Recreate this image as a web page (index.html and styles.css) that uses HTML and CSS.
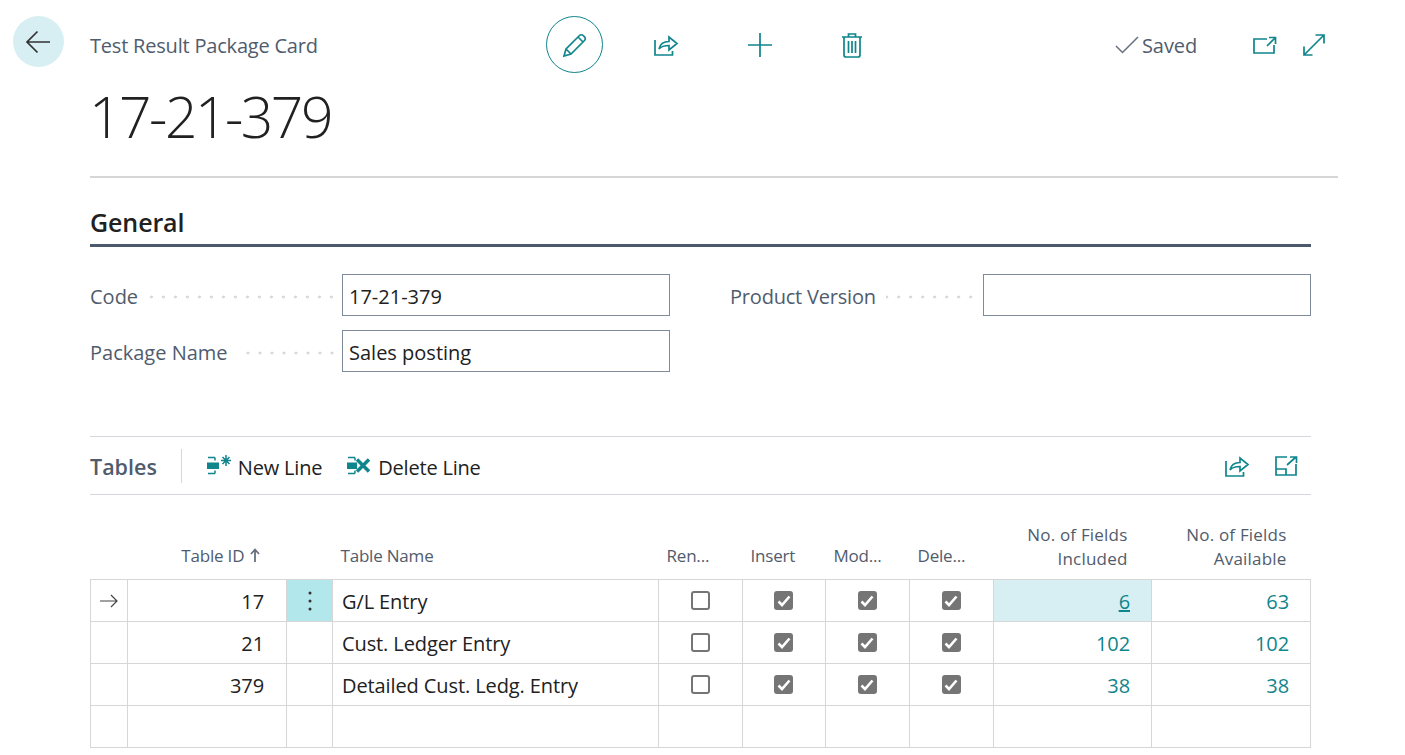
FILE: index.html
```html
<!DOCTYPE html>
<html lang="en">
<head>
<meta charset="utf-8">
<title>Test Result Package Card</title>
<link rel="stylesheet" href="styles.css">
</head>
<body>
<div class="page">
  <header class="topbar">
    <button class="back" aria-label="Back">
      <svg width="28" height="24" viewBox="0 0 28 24"><path d="M25 12H2M12.500 1.500 2 12l10.500 10.500" class="s-dark"/></svg>
    </button>
    <div class="caption">Test Result Package Card</div>
    <div class="actions">
      <span class="edit"><svg width="26" height="26" viewBox="0 0 26 26"><path d="M2 24l2-7L17.500 3.500a2.600 2.600 0 0 1 3.700 0l1.300 1.300a2.600 2.600 0 0 1 0 3.700L9 22zM4 17l5 5M16 5l5 5" class="s-teal"/></svg></span>
      <svg class="share" width="26" height="24" viewBox="0 0 26 24"><path d="M2 7v15h17.500v-4M6 16c1-5 5-7.500 10-7.500V4l8 6.500-8 6.500v-4.500c-4 0-7.500.5-10 3.500z" class="s-teal"/></svg>
      <svg class="plus" width="26" height="26" viewBox="0 0 26 26"><path d="M13 1v24M1 13h24" class="s-teal"/></svg>
      <svg class="trash" width="22" height="26" viewBox="0 0 22 26"><path d="M1 5h20M7.500 5V2h7v3M3 5v18a2 2 0 0 0 2 2h12a2 2 0 0 0 2-2V5M7.500 9v12M11 9v12M14.500 9v12" class="s-teal"/></svg>
    </div>
    <div class="status">
      <svg width="24" height="18" viewBox="0 0 24 18"><path d="M1 10l6.500 6.500L23 1" class="s-gray"/></svg>
      <span>Saved</span>
    </div>
    <svg class="popout" width="24" height="18" viewBox="0 0 24 18"><path d="M14 3H1v14h20V9M14 10l8-8M16 1.500h6.500V8" class="s-teal"/></svg>
    <svg class="expand" width="24" height="24" viewBox="0 0 24 24"><path d="M2 22 22 2M13.500 2H22v8.500M2 13.500V22h8.500" class="s-teal"/></svg>
  </header>

  <h1 class="title">17-21-379</h1>
  <div class="title-rule"></div>

  <main class="content">
    <h2 class="section">General</h2>
    <div class="form">
      <div class="form-col">
        <div class="field"><label>Code</label><span class="dots"></span><div class="input">17-21-379</div></div>
        <div class="field"><label>Package Name</label><span class="dots"></span><div class="input">Sales posting</div></div>
      </div>
      <div class="form-col form-col-right">
        <div class="field"><label>Product Version</label><span class="dots"></span><div class="input"></div></div>
      </div>
    </div>

    <div class="toolbar">
      <span class="tb-title">Tables</span>
      <span class="tb-sep"></span>
      <span class="tb-btn">
        <svg width="24" height="22" viewBox="0 0 24 22"><path d="M1 2.500h7M8 2.500v3M1 18.500h7M8 15.500v3" class="s-teal-t"/><rect x="0" y="7.500" width="12" height="6.500" class="f-teal"/><path d="M19 0v11M14 5.500h10M15.500 2l7 7M22.500 2l-7 7" class="s-teal-m"/></svg>
        <span class="tb-label">New Line</span>
      </span>
      <span class="tb-btn">
        <svg width="24" height="22" viewBox="0 0 24 22"><path d="M1 2.500h7M8 2.500v3M1 18.500h7M8 15.500v3" class="s-teal-t"/><rect x="0" y="7.500" width="10" height="6.500" class="f-teal"/><path d="M10 4.500l12 12M22 4.500l-12 12" class="s-teal-b"/></svg>
        <span class="tb-label">Delete Line</span>
      </span>
      <span class="tb-right">
        <svg width="26" height="24" viewBox="0 0 26 24"><path d="M2 7v15h17.500v-4M6 16c1-5 5-7.500 10-7.500V4l8 6.500-8 6.500v-4.500c-4 0-7.500.5-10 3.500z" class="s-teal"/></svg>
        <svg width="24" height="22" viewBox="0 0 24 22"><path d="M13 2H2v18h20V9M2 14h10v6M13 10l9-8M16 2h6.500v6" class="s-teal"/></svg>
      </span>
    </div>

    <table class="grid">
      <colgroup>
        <col class="c-mark"><col class="c-id"><col class="c-menu"><col class="c-name">
        <col class="c-chk"><col class="c-chk2"><col class="c-chk3"><col class="c-chk4">
        <col class="c-num"><col class="c-num2">
      </colgroup>
      <thead>
        <tr>
          <th></th><th class="h-id">Table ID <svg class="sort" width="10" height="14" viewBox="0 0 10 14"><path d="M5 14V2M1 6l4-4.500L9 6" class="s-sort"/></svg></th><th></th><th class="h-name">Table Name</th>
          <th class="h-chk">Ren...</th><th class="h-chk">Insert</th><th class="h-chk">Mod...</th><th class="h-chk">Dele...</th>
          <th class="h-num">No. of Fields<br>Included</th><th class="h-num">No. of Fields<br>Available</th>
        </tr>
      </thead>
      <tbody>
        <tr>
          <td class="mark"><svg width="18" height="14" viewBox="0 0 18 14"><path d="M0 7h17M11 1l6 6-6 6" class="s-thin"/></svg></td>
          <td class="num">17</td>
          <td class="menu"><svg width="4" height="22" viewBox="0 0 4 22"><circle cx="2" cy="3" r="1.500"/><circle cx="2" cy="11" r="1.500"/><circle cx="2" cy="19" r="1.500"/></svg></td>
          <td class="name">G/L Entry</td>
          <td class="chk"><span class="box"></span></td>
          <td class="chk"><span class="box on"><svg width="14" height="12" viewBox="0 0 14 12"><path d="M1.500 6.500 5 10l7.500-8.500" class="s-white"/></svg></span></td>
          <td class="chk"><span class="box on"><svg width="14" height="12" viewBox="0 0 14 12"><path d="M1.500 6.500 5 10l7.500-8.500" class="s-white"/></svg></span></td>
          <td class="chk"><span class="box on"><svg width="14" height="12" viewBox="0 0 14 12"><path d="M1.500 6.500 5 10l7.500-8.500" class="s-white"/></svg></span></td>
          <td class="num link active"><u>6</u></td>
          <td class="num link">63</td>
        </tr>
        <tr>
          <td></td>
          <td class="num">21</td>
          <td></td>
          <td class="name">Cust. Ledger Entry</td>
          <td class="chk"><span class="box"></span></td>
          <td class="chk"><span class="box on"><svg width="14" height="12" viewBox="0 0 14 12"><path d="M1.500 6.500 5 10l7.500-8.500" class="s-white"/></svg></span></td>
          <td class="chk"><span class="box on"><svg width="14" height="12" viewBox="0 0 14 12"><path d="M1.500 6.500 5 10l7.500-8.500" class="s-white"/></svg></span></td>
          <td class="chk"><span class="box on"><svg width="14" height="12" viewBox="0 0 14 12"><path d="M1.500 6.500 5 10l7.500-8.500" class="s-white"/></svg></span></td>
          <td class="num link">102</td>
          <td class="num link">102</td>
        </tr>
        <tr>
          <td></td>
          <td class="num">379</td>
          <td></td>
          <td class="name">Detailed Cust. Ledg. Entry</td>
          <td class="chk"><span class="box"></span></td>
          <td class="chk"><span class="box on"><svg width="14" height="12" viewBox="0 0 14 12"><path d="M1.500 6.500 5 10l7.500-8.500" class="s-white"/></svg></span></td>
          <td class="chk"><span class="box on"><svg width="14" height="12" viewBox="0 0 14 12"><path d="M1.500 6.500 5 10l7.500-8.500" class="s-white"/></svg></span></td>
          <td class="chk"><span class="box on"><svg width="14" height="12" viewBox="0 0 14 12"><path d="M1.500 6.500 5 10l7.500-8.500" class="s-white"/></svg></span></td>
          <td class="num link">38</td>
          <td class="num link">38</td>
        </tr>
        <tr><td></td><td></td><td></td><td></td><td></td><td></td><td></td><td></td><td></td><td></td></tr>
      </tbody>
    </table>
  </main>
</div>
</body>
</html>
```
FILE: styles.css
```css
* { box-sizing: border-box; }
html, body { margin: 0; padding: 0; height: 100%; overflow: hidden; background: #fff; }
body { font-family: "Open Sans", "Noto Sans", sans-serif; color: #212121; font-size: 20px; }

.s-dark, .s-teal, .s-gray, .s-thin, .s-white, .s-teal-t, .s-teal-m, .s-teal-b, .s-sort { fill: none; }
.s-dark { stroke: #333; stroke-width: 1.700; }
.s-teal { stroke: #0f858c; stroke-width: 1.700; }
.s-gray { stroke: #66707f; stroke-width: 1.500; }
.s-thin { stroke: #444; stroke-width: 1.200; }
.s-white { stroke: #fff; stroke-width: 2.600; }
.s-sort { stroke: #66707f; stroke-width: 1.800; }
.s-teal-t { stroke: #0f858c; stroke-width: 1.500; }
.s-teal-m { stroke: #0f858c; stroke-width: 1.500; }
.s-teal-b { stroke: #0f858c; stroke-width: 3.500; }
.f-teal { fill: #0f858c; }

.topbar { display: flex; align-items: center; padding: 16px 0 0 13px; height: 73px; }
.back { width: 51px; height: 51px; margin-bottom: 6px; border: 0; padding: 0; border-radius: 50%; background: #d7eff2; display: flex; align-items: center; justify-content: center; }
.caption { width: 456px; margin-left: 26px; padding-top: 2px; letter-spacing: -0.2px; color: #505c6d; }
.actions { display: flex; align-items: center; width: 560px; }
.edit { width: 57px; height: 57px; border: 1px solid #0f858c; border-radius: 50%; display: flex; align-items: center; justify-content: center; }
.share { margin-left: 50px; }
.plus { margin-left: 68px; }
.trash { margin-left: 68px; }
.status { display: flex; align-items: center; gap: 3px; color: #505c6d; width: 138px; margin-left: 9px; }
.status span { padding-top: 2px; letter-spacing: -0.1px; }
.expand { margin-left: 25px; }

.title { margin: 7px 0 0 89px; font-weight: 300; font-size: 57px; line-height: 72px; letter-spacing: -2.500px; color: #212121; }
.title-rule { margin: 24px 67px 0 90px; height: 2px; background: #d6d6d6; }

.content { margin: 0 94px 0 90px; }
.section { margin: 29px 0 0; height: 40px; font-size: 25px; line-height: 30px; letter-spacing: -0.1px; font-weight: 600; color: #212121; border-bottom: 3px solid #4a5a6a; }

.form { display: flex; gap: 60px; margin-top: 27px; height: 162px; }
.form-col { width: 580px; display: flex; flex-direction: column; gap: 14px; }
.form-col-right { width: 581px; }
.form-col-right label { letter-spacing: -0.2px; }
.form-col-right .dots { margin-right: 2px; }
.field { display: flex; align-items: center; height: 42px; color: #505c6d; }
.field label { white-space: nowrap; margin-top: 2px; }
.dots { flex: 1; height: 4px; margin: 4px 0 0 10px; background-image: radial-gradient(circle at 1.500px 2px, #d8d8d8 1.400px, transparent 1.600px); background-size: 12px 4px; background-repeat: repeat-x; background-position: right; }
.input { width: 328px; height: 42px; border: 1px solid #7f8b9b; padding: 0 6px; line-height: 43px; color: #212121; flex: none; }

.toolbar { display: flex; align-items: center; height: 59px; border-top: 1px solid #d6d6dc; border-bottom: 1px solid #d6d6dc; }
.tb-title { font-size: 21.500px; font-weight: 600; color: #505c6d; padding-top: 1px; }
.tb-sep { width: 1px; height: 34px; background: #d6d6d6; margin: 0 25px 0 24px; }
.tb-btn { display: flex; align-items: center; gap: 7px; margin-right: 25px; }
.tb-label { padding-top: 3px; letter-spacing: -0.2px; }
.tb-right { margin-left: auto; display: flex; align-items: center; gap: 24px; padding-right: 13px; }

.grid { border-collapse: collapse; table-layout: fixed; width: 1221px; margin-top: 28px; }
.c-mark { width: 37px; }
.c-id { width: 159px; }
.c-menu { width: 46px; }
.c-name { width: 326px; }
.c-chk { width: 84px; }
.c-chk2 { width: 83px; }
.c-chk3 { width: 84px; }
.c-chk4 { width: 84px; }
.c-num { width: 158px; }
.c-num2 { width: 159px; }
.grid th { font-weight: 400; font-size: 17px; line-height: 24px; color: #505c6d; letter-spacing: -0.2px; vertical-align: bottom; padding: 0 0 11px; white-space: nowrap; }
.h-id { text-align: right; padding-right: 27px !important; }
.sort { margin-left: 1px; }
.h-name { text-align: left; padding-left: 8px !important; }
.h-chk { text-align: left; padding-left: 8px !important; }
.h-num { text-align: right; padding-right: 24px !important; padding-bottom: 8px !important; letter-spacing: 0.2px !important; }
.grid td { height: 42px; border: 1px solid #d6d6d6; padding: 0; letter-spacing: -0.1px; }
.mark { text-align: center; }
.num { text-align: right; padding: 2px 22px 0 0 !important; }
.link { color: #0f858c; padding-right: 21px !important; }
.active { background: #d7eff2; }
.menu { background: #b2e8ec; text-align: center; }
.menu svg { display: block; margin: 0 auto; fill: #333; }
.name { padding: 2px 0 0 9px !important; }
.chk { text-align: center; }
.box { display: inline-flex; width: 19px; height: 19px; margin: 0 1px 4px 0; border: 2px solid #757575; border-radius: 3px; align-items: center; justify-content: center; vertical-align: middle; }
.box.on { background: #757575; }
```
